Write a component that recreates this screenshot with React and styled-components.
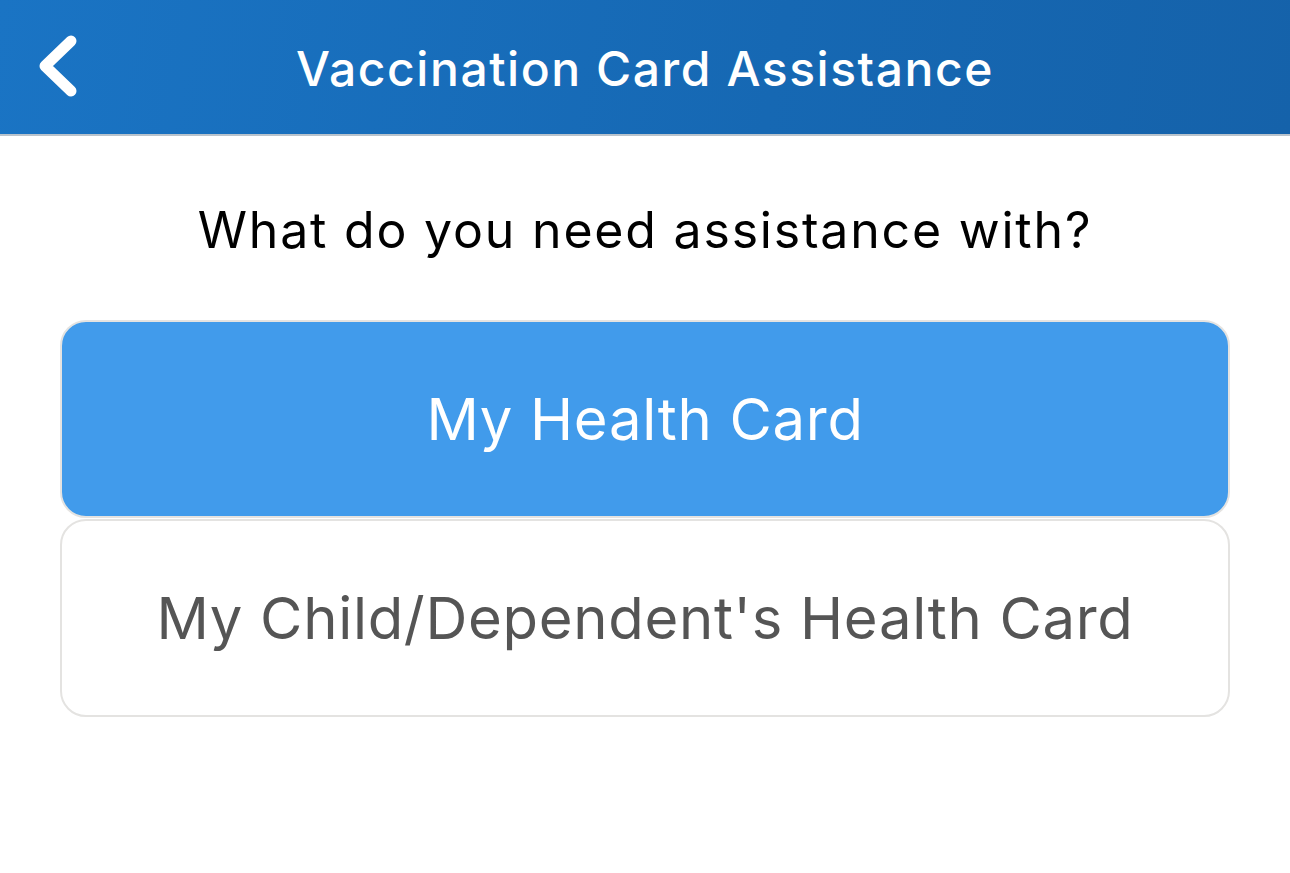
import React from "react";
import styled, { createGlobalStyle } from "styled-components";

const Global = createGlobalStyle`
  html, body { margin: 0; padding: 0; background: #fff; }
  body { font-family: Inter, "Open Sans", "Liberation Sans", sans-serif; }
`;

const Page = styled.div`
  width: 1290px;
  height: 873px;
  background: #fff;
  display: flex;
  flex-direction: column;
`;

const Header = styled.header`
  height: 134px;
  background: linear-gradient(100deg, #1a74c4 0%, #1668b3 60%, #1562aa 100%);
  border-bottom: 2px solid #b9c3cc;
  display: grid;
  grid-template-columns: 120px 1fr 120px;
  align-items: center;
`;

const BackButton = styled.button`
  background: none;
  border: none;
  padding: 0 0 0 36px;
  height: 100%;
  display: flex;
  align-items: center;
  cursor: pointer;
`;

const Title = styled.h1`
  margin: 2px 0 0;
  text-align: center;
  color: #fff;
  font-size: 48px;
  font-weight: 500;
  letter-spacing: 1.55px;
`;

const Question = styled.p`
  margin: 64px 0 0;
  text-align: center;
  color: #000;
  font-size: 50px;
  font-weight: 400;
  letter-spacing: 1.8px;
  line-height: 60px;
`;

const Options = styled.div`
  display: flex;
  flex-direction: column;
  padding: 0 60px;
  margin-top: 60px;
`;

const Option = styled.button`
  height: 198px;
  border: 2px solid #e4e3e1;
  border-radius: 26px;
  background: ${(p) => (p.$selected ? "#419beb" : "#fff")};
  color: ${(p) => (p.$selected ? "#fff" : "#555")};
  font-family: inherit;
  font-size: 58px;
  font-weight: 400;
  letter-spacing: 0.7px;
  display: flex;
  align-items: center;
  justify-content: center;
  cursor: pointer;
  margin-bottom: 1px;
`;

export default function App() {
  return (
    <Page>
      <Global />
      <Header>
        <BackButton aria-label="Back">
          <svg width="44" height="66" viewBox="0 0 44 66">
            <polyline
              points="35,7 9,32 35,57"
              fill="none"
              stroke="#fff"
              strokeWidth="11"
              strokeLinecap="round"
              strokeLinejoin="round"
            />
          </svg>
        </BackButton>
        <Title>Vaccination Card Assistance</Title>
        <div />
      </Header>
      <Question>What do you need assistance with?</Question>
      <Options>
        <Option $selected>My Health Card</Option>
        <Option>My Child/Dependent's Health Card</Option>
      </Options>
    </Page>
  );
}
